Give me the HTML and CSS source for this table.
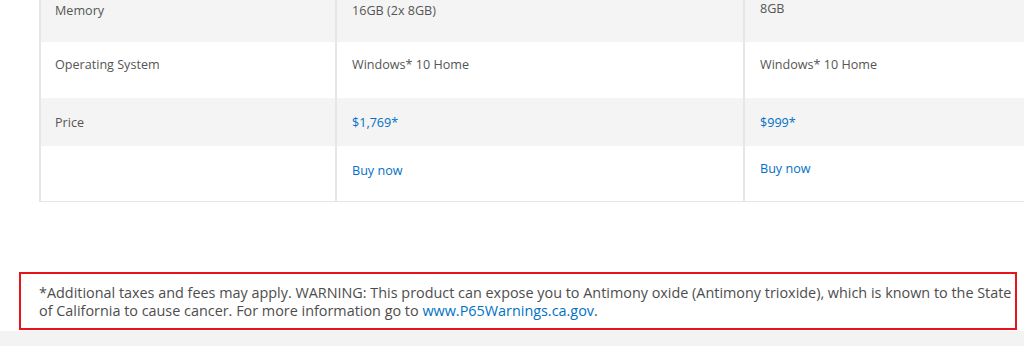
FILE: index.html
```html
<!DOCTYPE html>
<html lang="en">
<head>
<meta charset="utf-8">
<title>Specs</title>
<link rel="stylesheet" href="styles.css">
</head>
<body>
<main class="page">
  <section class="spec-wrap">
    <div class="spec-table">
      <div class="row gray r-mem">
        <div class="cell c1">Memory</div>
        <div class="cell c2">16GB (2x 8GB)</div>
        <div class="cell c3 up">8GB</div>
      </div>
      <div class="row r-os">
        <div class="cell c1">Operating System</div>
        <div class="cell c2">Windows* 10 Home</div>
        <div class="cell c3">Windows* 10 Home</div>
      </div>
      <div class="row gray r-price">
        <div class="cell c1">Price</div>
        <div class="cell c2"><a href="#" class="link">$1,769*</a></div>
        <div class="cell c3"><a href="#" class="link">$999*</a></div>
      </div>
      <div class="row r-buy">
        <div class="cell c1"></div>
        <div class="cell c2"><a href="#" class="link">Buy now</a></div>
        <div class="cell c3 up"><a href="#" class="link">Buy now</a></div>
      </div>
    </div>
  </section>
  <section class="note">
    <p>*Additional taxes and fees may apply. WARNING: This product can expose you to Antimony oxide (Antimony trioxide), which is known to the State of California to cause cancer. For more information go to <a href="#" class="link note-link">www.P65Warnings.ca.gov</a>.</p>
  </section>
  <div class="next-band"></div>
</main>
</body>
</html>
```
FILE: styles.css
```css
html, body {
  margin: 0;
  padding: 0;
  background: #fff;
}
body {
  font-family: "Open Sans", "Liberation Sans", sans-serif;
  color: #555;
  overflow: hidden;
}
.page {
  width: 1024px;
  height: 346px;
  overflow: hidden;
  display: flex;
  flex-direction: column;
}
.spec-wrap {
  overflow: hidden;
  height: 202px;
  flex: none;
}
.spec-table {
  margin: -14px 0 0 39px;
  width: 1120px;
  border-left: 2px solid #e6e6e6;
  border-bottom: 1px solid #e6e6e6;
}
.row {
  display: flex;
}
.row.gray {
  background: #f4f4f4;
}
.cell {
  font-size: 12.6px;
  line-height: 18px;
  box-sizing: border-box;
}
.c1 {
  width: 294px;
  padding-left: 14px;
}
.c2 {
  width: 408px;
  border-left: 2px solid #e6e6e6;
  padding-left: 15px;
}
.c3 {
  width: 410px;
  border-left: 2px solid #e6e6e6;
  padding-left: 15px;
}
.r-mem { height: 56px; }
.r-mem .cell { padding-top: 16px; }
.r-os { height: 56px; }
.r-os .cell { padding-top: 14px; }
.r-price { height: 48px; }
.r-price .cell { padding-top: 16px; }
.r-buy { height: 55px; }
.r-buy .cell { padding-top: 16px; }
.row .cell.up { padding-top: 14px; }
.link {
  color: #0071c5;
  text-decoration: none;
}
.note-link {
  display: inline-block;
  line-height: 18px;
}
.note {
  margin: 70px 0 0 19px;
  width: 998px;
  box-sizing: border-box;
  border: 2px solid #e8141b;
  padding: 10px 2px 8px 18px;
  flex: none;
}
.note p {
  margin: 0;
  font-size: 14.4px;
  line-height: 18px;
  color: #4d4d4d;
}
.next-band {
  flex: 1;
  background: #f3f3f3;
  margin-top: 1px;
}
```
